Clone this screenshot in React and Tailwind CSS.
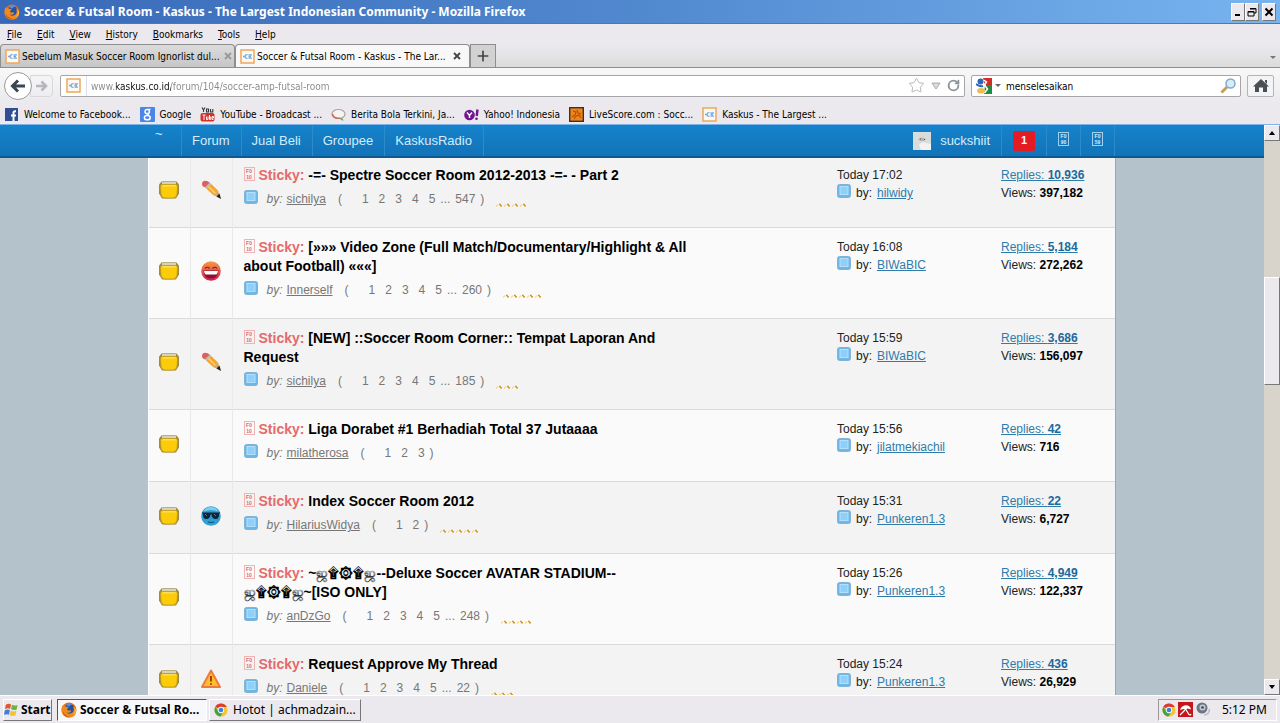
import React from 'react';
import { Plus, RotateCw, Star } from 'lucide-react';

const MENUS = ['File', 'Edit', 'View', 'History', 'Bookmarks', 'Tools', 'Help'];

const BOOKMARKS = [
  { icon: 'facebook', label: 'Welcome to Facebook...' },
  { icon: 'google', label: 'Google' },
  { icon: 'youtube', label: 'YouTube - Broadcast ...' },
  { icon: 'berita', label: 'Berita Bola Terkini, Ja...' },
  { icon: 'yahoo', label: 'Yahoo! Indonesia' },
  { icon: 'livescore', label: 'LiveScore.com : Socc...' },
  { icon: 'kaskus', label: 'Kaskus - The Largest ...' },
];

const THREADS = [
  { mood: 'pencil', title: ['-=- Spectre Soccer Room 2012-2013 -=- - Part 2'], author: 'sichilya', pages: ['1', '2', '3', '4', '5'], last: '547', stars: 4, time: '17:02', by: 'hilwidy', replies: '10,936', views: '397,182' },
  { mood: 'laugh', title: ['[»»» Video Zone (Full Match/Documentary/Highlight & All about Football) «««]'], author: 'Innerself', pages: ['1', '2', '3', '4', '5'], last: '260', stars: 5, time: '16:08', by: 'BIWaBIC', replies: '5,184', views: '272,262' },
  { mood: 'pencil', title: ['[NEW] ::Soccer Room Corner:: Tempat Laporan And Request'], author: 'sichilya', pages: ['1', '2', '3', '4', '5'], last: '185', stars: 3, time: '15:59', by: 'BIWaBIC', replies: '3,686', views: '156,097' },
  { title: ['Liga Dorabet #1 Berhadiah Total 37 Jutaaaa'], author: 'milatherosa', pages: ['1', '2', '3'], stars: 0, time: '15:56', by: 'jilatmekiachil', replies: '42', views: '716' },
  { mood: 'cool', title: ['Index Soccer Room 2012'], author: 'HilariusWidya', pages: ['1', '2'], stars: 5, time: '15:31', by: 'Punkeren1.3', replies: '22', views: '6,727' },
  { title: ['~ஜ۩۞۩ஜ--Deluxe Soccer AVATAR STADIUM--', 'ஜ۩۞۩ஜ~[ISO ONLY]'], author: 'anDzGo', pages: ['1', '2', '3', '4', '5'], last: '248', stars: 4, time: '15:26', by: 'Punkeren1.3', replies: '4,949', views: '122,337' },
  { mood: 'warning', title: ['Request Approve My Thread'], author: 'Daniele', pages: ['1', '2', '3', '4', '5'], last: '22', stars: 3, time: '15:24', by: 'Punkeren1.3', replies: '436', views: '26,929' },
];

function FirefoxIcon() {
  return (
    <svg viewBox="0 0 16 16" className="size-4 shrink-0" aria-hidden="true">
      <circle cx="8" cy="8" r="7.5" fill="#e66a12" />
      <circle cx="8.6" cy="7" r="5" fill="#2a4f9c" />
      <path d="M5 2.5c2-1.5 5-1 6.5.6-1.600-.3-2.500.2-2.700 1.200-.9.200-1.700.100-2.300-.4z" fill="#5b8ed8" />
      <path d="M1.300 3.200c.5.600.9.900 1.300 1 1-.3 1.800 0 2.500.5l2.600.5c-.2 1-1.400 1.200-1.700 2.200.5 1.200 1.700 1.200 2.800 1 .8-.2 1.300.300 1.200.8-1 1.800-3.600 2-5 .7 1.500 2.500 6.200 2.300 7.400-.6.700-1.700.4-3.700-.6-5.200 2.500 1.600 3.800 4.500 3 7.200-1 3-4 4.500-7 4.300C3.600 15.400.7 12.400.5 8.500c0-2 .2-3.800.8-5.300z" fill="#f08a1c" />
      <path d="M12.600 4.500c2 2.700 1.700 6.300-1 8.200 3.500-.6 4.600-5.600 1-8.200z" fill="#fbd24a" />
      <path d="M2 9.500c.7 3 3.300 4.800 6.400 4.800-1 .8-6.300.2-6.400-4.800z" fill="#b93a10" />
    </svg>
  );
}

function ChromeIcon() {
  return (
    <svg viewBox="0 0 16 16" className="size-[14px] shrink-0" aria-hidden="true">
      <circle cx="8" cy="8" r="7.500" fill="#f4c630" />
      <path d="M8 8L1.500 4.300A7.500 7.500 0 0 1 14.600 4.600H8z" fill="#dc3d30" />
      <path d="M1.500 4.300A7.500 7.500 0 0 0 7.400 15.500L11 9.500 8 8 4.800 9.500z" fill="#3fa34d" />
      <circle cx="8" cy="8" r="3.600" fill="#fff" />
      <circle cx="8" cy="8" r="2.700" fill="#3f7fd6" />
    </svg>
  );
}

function KaskusIcon() {
  return (
    <svg viewBox="0 0 15 15" className="size-[15px] shrink-0" aria-hidden="true">
      <rect x="1" y="1" width="13" height="13" fill="#fff8ee" stroke="#eba860" strokeWidth="1.500" />
      <path d="M3 7.500h2M7.500 5.800a1.800 1.800 0 1 0 0 3.400M8.500 5.800h3.500M8.500 7.500h2.500M8.500 9.200h3.500" stroke="#6fabe4" strokeWidth="1.300" fill="none" />
    </svg>
  );
}

function BookmarkIcon({ name }) {
  if (name === 'kaskus') return <KaskusIcon />;
  return (
    <svg viewBox="0 0 15 15" className="size-[15px] shrink-0" aria-hidden="true">
      {name === 'facebook' && (
        <>
          <rect x="1" y="1" width="13" height="13" fill="#2f4f91" />
          <path d="M9.500 14V8.500M7 8.500h5M12 4.200h-1q-1.500 0-1.500 1.500v3" stroke="#fff" strokeWidth="2" fill="none" />
        </>
      )}
      {name === 'google' && (
        <>
          <rect width="15" height="15" rx="1" fill="#4a86e8" />
          <circle cx="7.200" cy="4.600" r="2.200" fill="none" stroke="#fff" strokeWidth="1.500" />
          <ellipse cx="7.300" cy="10.700" rx="2.900" ry="2.100" fill="none" stroke="#fff" strokeWidth="1.500" />
          <path d="M7.500 2.300h3M7.500 6.800l1.300 1.700" stroke="#fff" strokeWidth="1.300" />
        </>
      )}
      {name === 'youtube' && (
        <>
          <path d="M2 0.500l1.500 2.500v2M5 0.500L3.500 3M6.500 2h2v3h-2zM10.500 2v3h2.300V2" stroke="#333" strokeWidth="1.100" fill="none" />
          <rect x="0.500" y="6" width="14" height="8.500" rx="2" fill="#d3322a" />
          <path d="M2.500 8h3M4 8v5M6.500 9.500v3h1.500v-3M9.500 8v4.500h1.200v-2.500H9.500M12 11h1.500V9.500H12v3h1.500" stroke="#fff" fill="none" strokeWidth="0.900" />
        </>
      )}
      {name === 'berita' && (
        <>
          <ellipse cx="7.500" cy="7" rx="6.500" ry="4.500" fill="#f6f3f0" stroke="#a9a49c" strokeWidth="1.200" />
          <path d="M1.500 7c0 3 4 5 7.500 4" stroke="#d06a62" strokeWidth="1.600" fill="none" />
          <path d="M9 11.500q2 0 3 2" stroke="#7aa66a" strokeWidth="1.500" fill="none" />
        </>
      )}
      {name === 'yahoo' && (
        <>
          <circle cx="5.500" cy="8" r="5.300" fill="#6f1690" />
          <path d="M3 5.500l2.500 3 2.500-3M5.500 8.500V11" stroke="#fff" strokeWidth="1.400" fill="none" />
          <path d="M13.500 2.500l-.8 6.500" stroke="#6f1690" strokeWidth="2.400" />
          <circle cx="12.500" cy="11.700" r="1.300" fill="#6f1690" />
        </>
      )}
      {name === 'livescore' && (
        <>
          <rect x="0.700" y="0.700" width="13.600" height="13.600" fill="#f08418" stroke="#3c3028" strokeWidth="1.400" />
          <path d="M4 4l3 1-1 3-3 2M8 3l1 3 3 1M7 9l3-1 2 3M5 12l2-3" stroke="#b14d08" strokeWidth="1.100" fill="none" />
        </>
      )}
    </svg>
  );
}

function MoodIcon({ name }) {
  if (!name) return null;
  return (
    <svg viewBox="0 0 20 20" className="mx-auto size-5" aria-hidden="true">
      {name === 'pencil' && (
        <>
          <path d="M1 4Q1 1 4 .8q3 0 5 2.200L4.500 7.500Q1 6.500 1 4z" fill="#dd605c" />
          <path d="M4 7.200l4.800-4.600 1.500 1.400-4.600 5z" fill="#b8bcc2" />
          <path d="M5.400 8.800l4.800-4.900 6.800 6.600-4.600 4.800z" fill="#f3a52c" />
          <path d="M7.500 6.500l7 7" stroke="#fbd070" strokeWidth="1.600" />
          <path d="M12.400 15.300l4.600-4.800 2.600 7.700z" fill="#d9a860" />
          <path d="M15.500 16.500l3-3 1.500 5.400z" fill="#222" />
        </>
      )}
      {name === 'laugh' && (
        <>
          <defs>
            <linearGradient id="laugh" x2="0" y2="1"><stop stopColor="#f99a48" /><stop offset="1" stopColor="#d3194c" /></linearGradient>
          </defs>
          <circle cx="10" cy="10" r="9.800" fill="url(#laugh)" />
          <path d="M4 7.500q2-2.500 4.500 0M16 7.500q-2-2.500-4.500 0" stroke="#7d2212" strokeWidth="1.200" fill="none" />
          <path d="M2.500 9.500h15q-.5 8-7.500 8t-7.500-8z" fill="#8d1030" />
          <path d="M3 10h14q-.3 2.500-1.500 3.500h-11Q3.200 12.500 3 10z" fill="#fff" />
        </>
      )}
      {name === 'cool' && (
        <>
          <circle cx="10" cy="10" r="9.800" fill="#2e9fd4" />
          <path d="M2.500 5.500a8.500 8.500 0 0 1 15 0q-7.500-3-15 0z" fill="#7cd0ee" />
          <path d="M.8 6.500h18.400l-1 1.500c-.2 4-1.500 5-3.700 5S11 12 10.500 8.500h-1C9 12 7.700 13 5.500 13S2 12 1.800 8z" fill="#10243a" />
          <path d="M4 8l2 2M13 8l2 2" stroke="#57799a" strokeWidth="1" />
          <path d="M7 16q3 1 6 0" stroke="#155b86" strokeWidth="1.200" fill="none" />
        </>
      )}
      {name === 'warning' && (
        <>
          <path d="M10 1.500L19 18H1z" fill="#fbc02c" stroke="#ee7a3c" strokeWidth="2" strokeLinejoin="round" />
          <path d="M10 7v5.500" stroke="#b23a10" strokeWidth="2" />
          <circle cx="10" cy="15" r="1.100" fill="#b23a10" />
        </>
      )}
    </svg>
  );
}

function FolderIcon() {
  return (
    <svg viewBox="0 0 20 20" className="mx-auto size-5" aria-hidden="true">
      <path d="M2.500 1.500Q3 1 4 1h12q1 0 1.500.5L20 4.500v9l-3 5H3l-3-5v-9z" fill="#9a8a4c" />
      <rect x="3" y="1.500" width="14" height="3" fill="#d9d2ba" />
      <path d="M3.500 4.500h13q2 0 2 2l-.5 7.500q-.5 4-4 4H6q-3.500 0-4-4L1.500 6.500q0-2 2-2z" fill="#fccc08" stroke="#c39a14" strokeWidth="0.800" />
      <path d="M3.500 5.800h13" stroke="#fde36a" strokeWidth="1.200" />
    </svg>
  );
}

function LastPostIcon() {
  return (
    <svg viewBox="0 0 14 14" className="size-[14px] shrink-0" aria-hidden="true">
      <rect x="0.500" y="0.500" width="13" height="13" rx="2" fill="#6fb6e4" stroke="#7fb4d6" />
      <rect x="3" y="2.500" width="8" height="8" fill="#8fd0fa" stroke="#b5e0fb" />
    </svg>
  );
}

// box shown for icon-font characters the browser has no glyph for
function MissingGlyph({ top, bottom, className }) {
  return (
    <span className={`inline-flex h-[14px] w-[11px] flex-col items-center justify-center border text-[5px] leading-[6px] font-bold ${className}`}>
      <span>{top}</span>
      <span>{bottom}</span>
    </span>
  );
}

function Rating({ count }) {
  return (
    <svg width={count * 8} height="4" viewBox={`0 0 ${count * 8} 4`} className="mt-3 ml-3 shrink-0" aria-hidden="true">
      {Array.from({ length: count }, (_, i) => (
        <g key={i}>
          <path d={`M${i * 8} 3.500l2-2`} stroke="#f0dc9a" strokeWidth="1.500" />
          <path d={`M${i * 8 + 3} 1.500h2M${i * 8 + 4} 2.800h2`} stroke="#d99a2c" strokeWidth="1.400" />
        </g>
      ))}
    </svg>
  );
}

function ThreadRow({ thread, index }) {
  const shade = index % 2 === 0 ? 'bg-[#f3f3f3]' : 'bg-[#fafafa]';
  return (
    <tr className={`border-b border-[#dadada] ${shade}`}>
      <td className="border-r border-[#e9e9e9] pb-1"><FolderIcon /></td>
      <td className="border-r border-[#e9e9e9] pb-1"><MoodIcon name={thread.mood} /></td>
      <td className="pt-[10px] pb-[19px] pl-[11px] align-top">
        <h3 className="max-w-[446px] text-sm leading-[19px] font-bold text-black">
          <MissingGlyph top="F0" bottom="10" className="mr-1 border-[#f0b4b4] align-text-top text-[#e06a6a]" />
          <span className="text-[#e46a6c]">Sticky:</span>{' '}
          {thread.title.map((line, i) => (
            <React.Fragment key={i}>{i > 0 && <br />}<a href="#thread">{line}</a></React.Fragment>
          ))}
        </h3>
        <div className="mt-[5px] flex h-[18px] items-center text-[#777]">
          <span className="mr-[9px] pb-1"><LastPostIcon /></span>
          <i className="mr-1">by:</i>
          <a href="#author" className="underline">{thread.author}</a>
          <span className="mr-5 ml-3">(</span>
          <span className="flex gap-[10px]">
            {thread.pages.map((p) => <a href="#page" key={p}>{p}</a>)}
          </span>
          {thread.last && (
            <>
              <span className="mx-[5px]">...</span>
              <a href="#page">{thread.last}</a>
            </>
          )}
          <span className="ml-[5px]">)</span>
          {thread.stars > 0 && <Rating count={thread.stars} />}
        </div>
      </td>
      <td className="pt-[10px] align-top leading-[18px] text-[#222]">
        <div>Today {thread.time}</div>
        <div className="flex">
          <span className="mr-[5px]"><LastPostIcon /></span>
          <span className="mr-[5px]">by:</span>
          <a href="#poster" className="text-[#2f7cab] underline">{thread.by}</a>
        </div>
      </td>
      <td className="pt-[10px] align-top leading-[18px] text-[#222]">
        <a href="#replies" className="text-[#2f7cab] underline">Replies: <b className="text-[#1b6a9c]">{thread.replies}</b></a>
        <div>Views: <b className="text-black">{thread.views}</b></div>
      </td>
    </tr>
  );
}

function WindowButton({ label, children }) {
  return (
    <button aria-label={label} className="flex h-[18px] w-[14px] items-center justify-center border border-t-white border-r-[#777] border-b-[#777] border-l-white bg-[#ebe9ed]">
      <svg viewBox="0 0 10 10" className="size-[10px] shrink-0" fill="none" stroke="#000">{children}</svg>
    </button>
  );
}

function BrowserTab({ label, active }) {
  return (
    <div className={`flex h-[23px] w-[235px] items-center rounded-t-sm border border-b-0 border-[#8e8e8e] pr-1 pl-1 ${active ? 'bg-[#f8f8f9]' : 'bg-linear-to-b from-[#dcdcdc] to-[#c6c6c6]'}`}>
      <KaskusIcon />
      <button className="ml-[2px] flex-1 pt-px text-left whitespace-nowrap">{label}</button>
      <button aria-label="Close tab" className="p-1">
        <svg viewBox="0 0 8 8" className={`size-2 ${active ? 'stroke-[#444]' : 'stroke-[#999]'}`} strokeWidth="1.800"><path d="M1 1l6 6M7 1L1 7" /></svg>
      </button>
    </div>
  );
}

export default function App() {
  return (
    <div className="flex h-screen flex-col overflow-hidden bg-[#ebe9ed] font-['DejaVu_Sans_Condensed','DejaVu_Sans',sans-serif] text-[10px] text-black">
      {/* Title bar */}
      <header className="flex h-6 shrink-0 items-center border-b border-[#4c78b4] bg-linear-to-r from-[#3868b8] via-[#5189cf] to-[#78b4f0] pr-1 pl-1">
        <FirefoxIcon />
        <h1 className="ml-1 flex-1 font-['Noto_Sans',sans-serif] text-[12px] font-bold text-white">
          Soccer &amp; Futsal Room - Kaskus - The Largest Indonesian Community - Mozilla Firefox
        </h1>
        <WindowButton label="Minimize"><path d="M2 8h5" strokeWidth="2" /></WindowButton>
        <WindowButton label="Restore"><path d="M3 1.500h6V6H7M1 4.500h6V9H1zM3 2h6M1 5h6" /></WindowButton>
        <span className="w-[3px]" />
        <WindowButton label="Close"><path d="M1.500 1.500l7 7M8.500 1.500l-7 7" strokeWidth="2" /></WindowButton>
      </header>

      <nav className="flex h-[21px] shrink-0 items-center gap-[15px] px-[7px]">
        {MENUS.map((m) => (
          <button key={m} className="first-letter:underline">{m}</button>
        ))}
      </nav>

      <div className="flex h-[23px] shrink-0 items-end border-b border-[#8e8e8e] bg-linear-to-b from-[#ebe9ed] to-[#dcdcdc]">
        <BrowserTab label="Sebelum Masuk Soccer Room Ignorlist dul..." />
        <BrowserTab label="Soccer & Futsal Room - Kaskus - The Lar..." active />
        <button aria-label="New tab" className="flex h-[23px] w-[26px] items-center justify-center border border-b-0 border-[#8e8e8e] bg-[#d2d2d2]">
          <Plus className="size-4 text-[#444]" strokeWidth={2.5} />
        </button>
        <button aria-label="List all tabs" className="mr-1 mb-2 ml-auto border-x-[3px] border-t-[3px] border-x-transparent border-t-[#777]" />
      </div>

      {/* Address bar */}
      <div className="flex h-[35px] shrink-0 items-center bg-linear-to-b from-[#f8f8f9] to-[#ebe9ed] pr-[6px] pl-1">
        <button aria-label="Back" className="z-10 flex size-7 items-center justify-center rounded-full border border-[#9a9a9a] bg-white">
          <svg viewBox="0 0 16 16" className="size-4" fill="none" stroke="#3a4650" strokeWidth="3"><path d="M15 8H3M8 2.500L2.500 8 8 13.500" /></svg>
        </button>
        <button aria-label="Forward" className="-ml-[2px] flex h-[22px] w-[23px] items-center justify-center rounded-r-sm border border-[#d8d8dc]">
          <svg viewBox="0 0 12 12" className="size-3" fill="none" stroke="#b4b8bc" strokeWidth="2.500"><path d="M0 6h9M5.500 1.500L10 6l-4.500 4.500" /></svg>
        </button>
        <div className="ml-[7px] flex h-[22px] flex-1 items-center rounded-xs border border-[#a6a6aa] bg-white pr-1">
          <span className="flex h-full w-[26px] items-center justify-center border-r border-[#dde]"><KaskusIcon /></span>
          <input
            aria-label="Address"
            defaultValue="www.kaskus.co.id/forum/104/soccer-amp-futsal-room"
            className="ml-1 flex-1 bg-[linear-gradient(90deg,#888_25px,#111_25px,#111_80px,#888_80px)] bg-clip-text pt-px text-transparent outline-none"
          />
          <Star className="size-[17px] text-[#aaa]" strokeWidth={1.2} />
          <svg viewBox="0 0 10 8" className="mx-[6px] h-2 w-[10px]" fill="#ddd" stroke="#aaa"><path d="M1 1h8L5 7z" /></svg>
          <RotateCw className="size-[13px] text-[#8d949c]" strokeWidth={3.5} />
        </div>
        <div className="ml-[6px] flex h-[22px] w-[270px] items-center rounded-xs border border-[#a6a6aa] bg-white px-1">
          <svg viewBox="0 0 16 16" className="size-4" aria-hidden="true">
            <path d="M7 0h9v8H9z" fill="#d02c2a" />
            <path d="M9 7h7v9H8z" fill="#1f8c3c" />
            <circle cx="4.500" cy="3.500" r="3" fill="#2b64b8" />
            <path d="M7.500 2l3 2-2 3 3 4-3 4" fill="none" stroke="#fff" strokeWidth="1.500" />
            <path d="M0 6q4 3 7 2" stroke="#2b64b8" strokeWidth="2" fill="none" />
            <ellipse cx="5" cy="12.800" rx="4" ry="2.800" fill="#eebb55" />
          </svg>
          <span className="mr-[5px] ml-[3px] border-x-[3px] border-t-[3px] border-x-transparent border-t-[#666]" />
          <input aria-label="Search" defaultValue="menselesaikan" className="min-w-0 flex-1 pt-px outline-none" />
          <svg viewBox="0 0 16 16" className="size-4" fill="none" aria-hidden="true">
            <path d="M1.500 14.500L7 9" stroke="#c99a56" strokeWidth="2.800" />
            <circle cx="10.500" cy="5.500" r="4.500" fill="#d4ecfb" stroke="#86a8c8" strokeWidth="1.500" />
          </svg>
        </div>
        <button aria-label="Home" className="ml-[6px] flex h-[22px] w-[27px] items-center justify-center rounded-xs border border-[#b4b4b8] bg-[#f4f4f6]">
          <svg viewBox="0 0 16 14" className="h-[14px] w-4" fill="#4a4f55" aria-hidden="true"><path d="M8 0l8 7.500h-2V13h-4V8.500H6V13H2V7.500H0zM12 1h2v4l-2-2z" /></svg>
        </button>
      </div>

      <nav className="flex h-[22px] shrink-0 items-center gap-[9px] border-b border-[#7fb2e6] pt-px pl-1">
        {BOOKMARKS.map((b) => (
          <a href="#bookmark" key={b.label} className="flex items-center gap-[5px] whitespace-nowrap">
            <BookmarkIcon name={b.icon} />{b.label}
          </a>
        ))}
      </nav>

      {/* Page */}
      <div className="flex min-h-0 flex-1 font-['Liberation_Sans',Arial,sans-serif] text-xs">
        <main className="min-w-0 flex-1 overflow-hidden bg-[#b4c2cb]">
          <div className="relative z-10 h-[33px] border-b-2 border-[#0d5a93] bg-linear-to-b from-[#1583cc] to-[#1273b8]">
            <div className="mx-auto flex h-full max-w-[966px] text-[13px] text-[#d6ecfa]">
              <a href="#home" className="w-[33px] border-r border-[#2b8ccb] pl-[6px]">~</a>
              {['Forum', 'Jual Beli', 'Groupee', 'KaskusRadio'].map((n) => (
                <a key={n} href="#nav" className="flex items-center border-r border-[#2b8ccb] pr-[11px] pl-[10px]">{n}</a>
              ))}
              <a href="#profile" className="ml-auto flex items-center gap-[9px] border-r border-[#2b8ccb] pr-[11px]">
                <svg viewBox="0 0 18 18" className="size-[18px]" aria-hidden="true">
                  <rect width="18" height="18" fill="#d9dcdc" />
                  <path d="M6 13q3-4 7-2l5 1v6H8z" fill="#f4f2ee" />
                  <path d="M5 7q4-3 8 0l-2 2H7z" fill="#b9b6b2" />
                  <path d="M7 7h1M11 7.500h1" stroke="#555" />
                </svg>
                suckshiit
              </a>
              <a href="#notifications" className="flex w-[45px] items-center justify-center border-r border-[#2b8ccb]">
                <span className="flex h-5 w-[22px] items-center justify-center rounded-xs bg-[#e31b23] text-[11px] font-bold text-white">1</span>
              </a>
              <a href="#messages" className="flex w-[34px] justify-center border-r border-[#2b8ccb] pt-[7px]">
                <MissingGlyph top="F0" bottom="90" className="border-[#9fd0ee]" />
              </a>
              <a href="#settings" className="flex w-[34px] justify-center border-r border-[#2b8ccb] pt-[7px]">
                <MissingGlyph top="F0" bottom="59" className="border-[#9fd0ee]" />
              </a>
            </div>
          </div>
          <div className="mx-auto -mt-[2px] max-w-[968px] border-x border-l-white border-r-[#98a8b2]">
            <table className="w-full table-fixed border-collapse">
              <colgroup>
                <col className="w-[41px]" />
                <col className="w-[42px]" />
                <col />
                <col className="w-[164px]" />
                <col className="w-[114px]" />
              </colgroup>
              <tbody>
                {THREADS.map((t, i) => <ThreadRow key={t.time} thread={t} index={i} />)}
              </tbody>
            </table>
          </div>
        </main>

        {/* Scrollbar */}
        <div className="flex w-4 shrink-0 flex-col bg-[#d8d4cc]">
          <button aria-label="Scroll up" className="flex h-4 items-center justify-center border border-t-white border-r-[#777] border-b-[#777] border-l-white bg-[#ebe9ed]">
            <span className="border-x-[3px] border-b-[4px] border-x-transparent border-b-black" />
          </button>
          <div className="grow-[137]" />
          <div className="grow-[107] border border-t-white border-r-[#777] border-b-[#777] border-l-white bg-[#ebe9ed]" />
          <div className="grow-[296]" />
          <button aria-label="Scroll down" className="flex h-4 items-center justify-center border border-t-white border-r-[#777] border-b-[#777] border-l-white bg-[#ebe9ed]">
            <span className="border-x-[3px] border-t-[4px] border-x-transparent border-t-black" />
          </button>
        </div>
      </div>

      {/* Taskbar */}
      <footer className="flex h-7 shrink-0 items-center border-t border-white bg-[#ebe9ed] px-[3px] font-['Noto_Sans',sans-serif] text-[12px] leading-4">
        <button className="flex h-[22px] w-[49px] items-center gap-[2px] border border-t-white border-r-[#777] border-b-[#777] border-l-white font-bold">
          <svg viewBox="0 0 16 16" className="size-[15px] shrink-0" aria-hidden="true">
            <path d="M2 3q3-2 5.500-.3L6.500 7.500Q4 6 1 7.700z" fill="#e5552c" />
            <path d="M8.500 3q3 1.500 6 .2l-1 4.800q-3 1.200-6-.2z" fill="#6db33f" />
            <path d="M.8 9q3-1.700 5.500-.2L5.200 13.500Q3 12.300 0 13.700z" fill="#3f7fd6" />
            <path d="M7.200 9.200q3 1.500 6 .2l-1 4.800q-3 1.200-6-.2z" fill="#f5bf2e" />
          </svg>
          Start
        </button>
        <button className="ml-[5px] flex h-[22px] w-[150px] items-center gap-[3px] border border-t-[#555] border-r-white border-b-white border-l-[#555] bg-[#f8f8fa] pl-[3px] font-bold whitespace-nowrap">
          <FirefoxIcon />Soccer &amp; Futsal Ro...
        </button>
        <button className="ml-[2px] flex h-[22px] w-[152px] items-center gap-[5px] border border-t-white border-r-[#777] border-b-[#777] border-l-white pl-1 whitespace-nowrap">
          <ChromeIcon />Hotot | achmadzain...
        </button>
        <div className="ml-auto flex h-[22px] w-[119px] items-center border border-t-[#999] border-r-white border-b-white border-l-[#999] pl-[3px]">
          <ChromeIcon />
          <svg viewBox="0 0 15 15" className="ml-[2px] size-[15px]" aria-hidden="true">
            <rect width="15" height="15" fill="#c4161c" />
            <path d="M2 8Q4 2.500 10 3.500q3 1.500 3 4L9.500 6.500 7.500 8 5.500 7z" fill="#fff" />
            <path d="M7.500 7L11 12.500q1.500 1 2-.5M7 8l-5 5" stroke="#fff" strokeWidth="1.200" fill="none" />
          </svg>
          <svg viewBox="0 0 15 15" className="ml-[3px] size-[15px]" aria-hidden="true">
            <circle cx="6" cy="6" r="5.500" fill="#6e7684" />
            <circle cx="6.500" cy="5.500" r="3" fill="#c4cad4" />
            <circle cx="6.500" cy="5.500" r="1.300" fill="#3b414d" />
            <path d="M8 13q5 0 5.500-6" stroke="#b9bccb" strokeWidth="1.600" fill="none" />
          </svg>
          <time className="ml-auto pr-[9px]">5:12 PM</time>
        </div>
      </footer>
    </div>
  );
}
